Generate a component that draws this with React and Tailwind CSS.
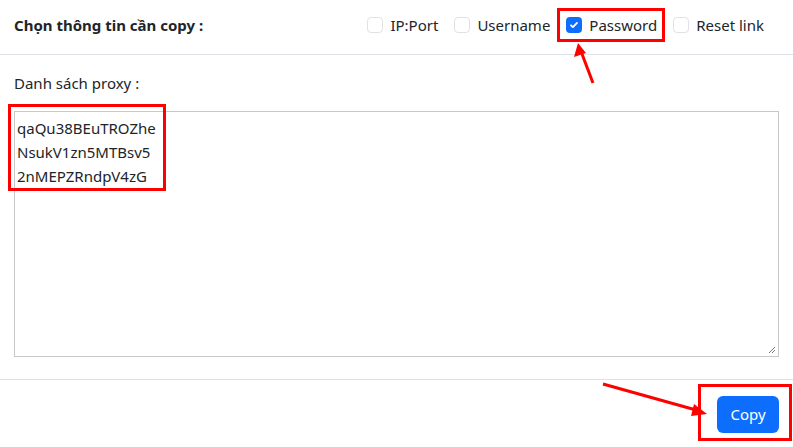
import { useState } from "react";

const options = [
  { key: "ip", label: "IP:Port" },
  { key: "user", label: "Username" },
  { key: "pass", label: "Password" },
  { key: "reset", label: "Reset link" },
];

const proxies = ["qaQu38BEuTROZhe", "NsukV1zn5MTBsv5", "2nMEPZRndpV4zG"];

function Check({ checked }) {
  if (checked) {
    return (
      <span className="w-4 h-4 rounded-[4px] bg-[#0d6efd] flex items-center justify-center shrink-0">
        <svg width="12" height="12" viewBox="0 0 20 20" fill="none">
          <path d="M5 10.5l3.2 3L15 6.5" stroke="#fff" strokeWidth="3" strokeLinecap="round" strokeLinejoin="round" />
        </svg>
      </span>
    );
  }
  return <span className="w-4 h-4 rounded-[4px] border border-[#dee2e6] bg-white shrink-0" />;
}

export default function App() {
  const [selected] = useState({ pass: true });

  return (
    <div
      className="relative w-[793px] h-[447px] bg-white text-[#212529] overflow-hidden"
      style={{ fontFamily: '"Noto Sans", "Open Sans", sans-serif' }}
    >
      {/* Header */}
      <div className="h-[55px] flex items-center justify-between pl-[14px] pr-[29px] pb-[4px] border-b border-[#dee2e6]">
        <h5 className="text-[15px] font-bold">Chọn thông tin cần copy :</h5>
        <div className="flex items-center gap-[16px] text-[15px] text-[#212529]">
          {options.map((o) => (
            <label key={o.key} className="flex items-center gap-[7px]">
              <Check checked={!!selected[o.key]} />
              <span>{o.label}</span>
            </label>
          ))}
        </div>
      </div>

      {/* Body */}
      <div className="px-[14px] pt-[17px] pb-[22px]">
        <div className="text-[15px] text-[#212529] leading-[22px] mb-[17px]">Danh sách proxy :</div>
        <div className="relative h-[246px] border border-[#c8c8c8] px-[2px] py-[4px] text-[15px] leading-[24px]">
          {proxies.map((p) => (
            <div key={p}>{p}</div>
          ))}
          <svg className="absolute right-[2px] bottom-[2px]" width="8" height="8" viewBox="0 0 8 8">
            <path d="M7 1L1 7M7 4L4 7" stroke="#777" strokeWidth="1" />
          </svg>
        </div>
      </div>

      {/* Footer */}
      <div className="border-t border-[#dee2e6] flex justify-end px-[14px] pt-[16px]">
        <button className="h-[37px] w-[62px] rounded-[6px] bg-[#0d6efd] text-white text-[15px]">Copy</button>
      </div>

      {/* Annotations */}
      <div className="absolute left-[557px] top-[8px] w-[108px] h-[34px] border-[3px] border-[#ff0000]" />
      <div className="absolute left-[8px] top-[104px] w-[158px] h-[87px] border-[3px] border-[#ff0000]" />
      <div className="absolute left-[698px] top-[384px] w-[94px] h-[57px] border-[3px] border-[#ff0000]" />
      <svg className="absolute left-0 top-0 pointer-events-none" width="793" height="447">
        <line x1="593" y1="83" x2="582" y2="54" stroke="#ff0000" strokeWidth="3" />
        <polygon points="578,43 574,57 586,53" fill="#ff0000" />
        <line x1="603" y1="384" x2="696" y2="410" stroke="#ff0000" strokeWidth="3" />
        <polygon points="707,414 694,404 691,416" fill="#ff0000" />
      </svg>
    </div>
  );
}
